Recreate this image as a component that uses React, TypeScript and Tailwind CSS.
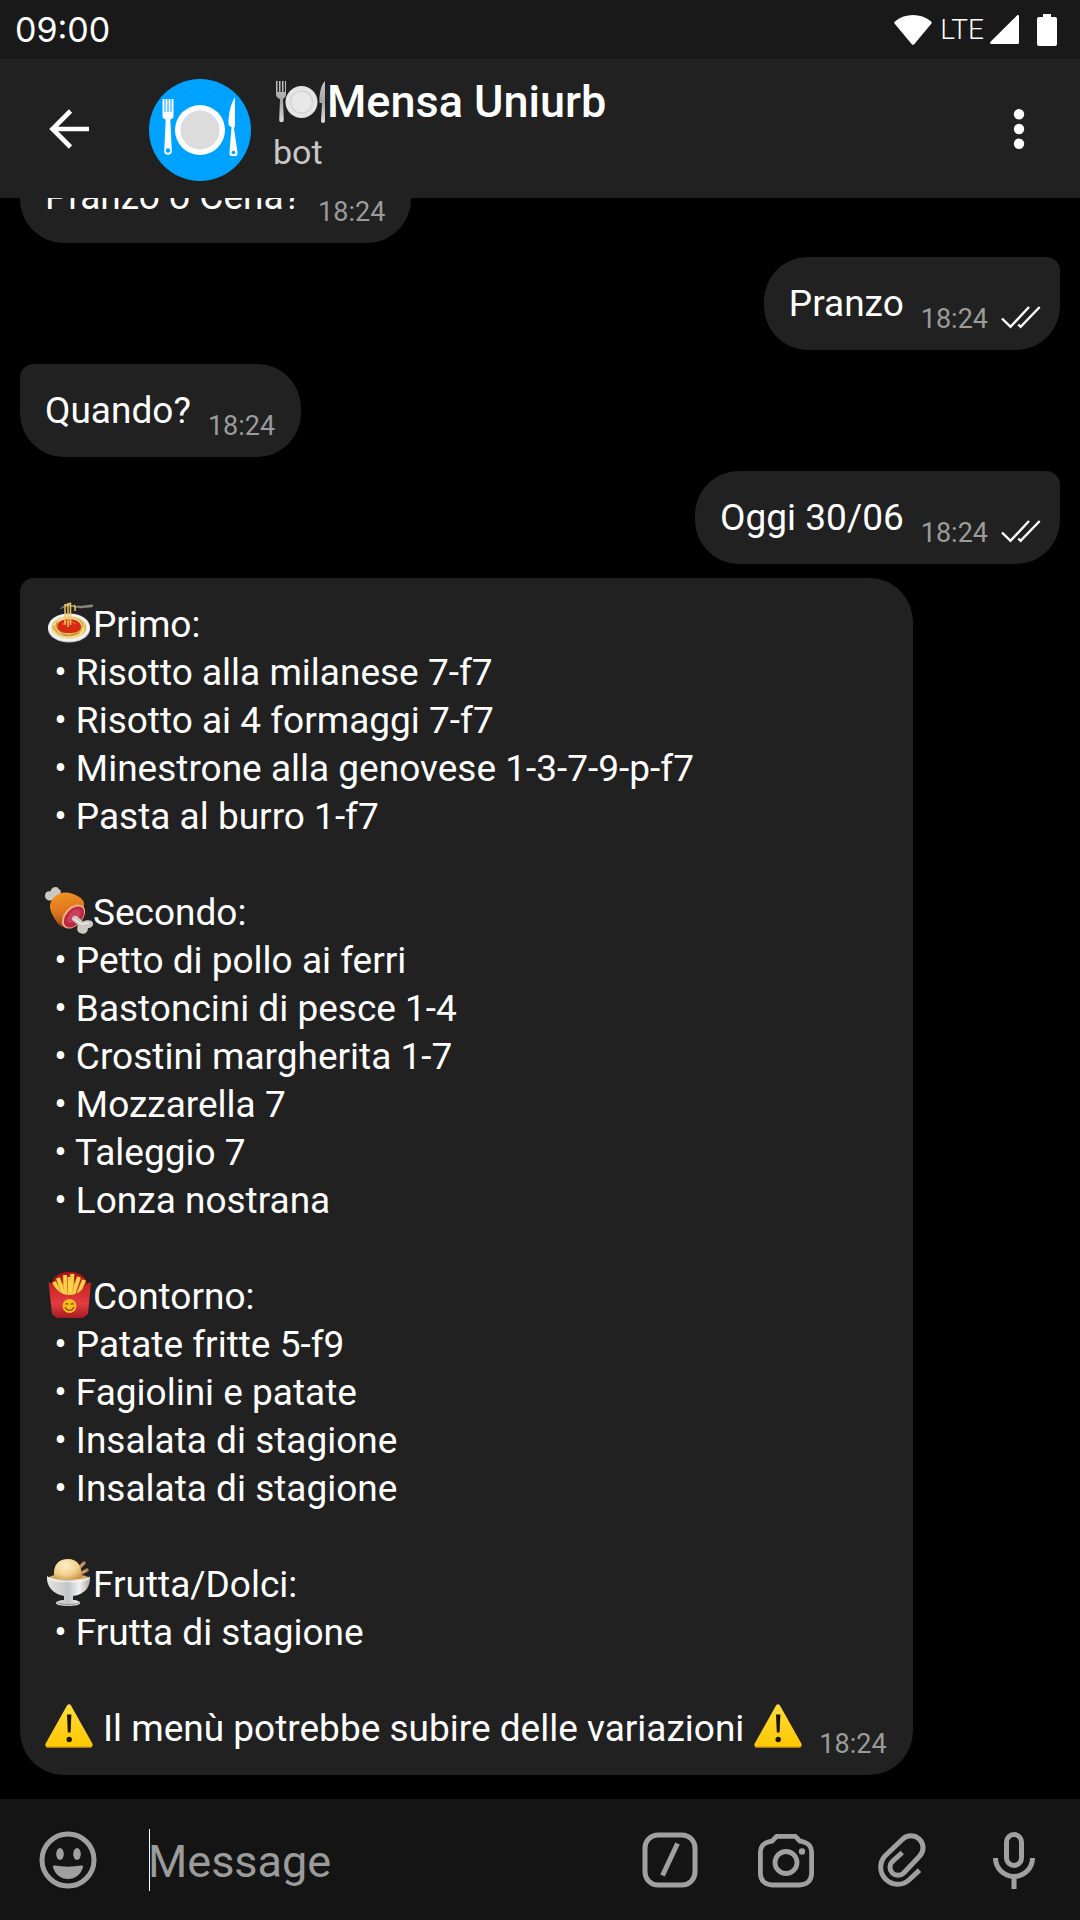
import type { ReactNode } from "react";

function WifiIcon() {
  return (
    <svg className="h-[30px] w-[38px]" viewBox="0 0 38 30" aria-hidden="true">
      <path d="M1.2 6.2C11-2 27-2 36.800 6.200c1 .8 1.100 1.700.5 2.500L20.200 29.200c-.7.8-1.700.8-2.400 0L.7 8.700C.1 7.900.2 7 1.200 6.200z" fill="#fff" />
    </svg>
  );
}

function SignalIcon() {
  return (
    <svg className="h-[29px] w-[29px]" viewBox="0 0 29 29" aria-hidden="true">
      <path d="M27 .5c.7-.8 2-.3 2 .8V27.500a1.500 1.500 0 0 1-1.500 1.500H1.500C.2 29-.4 27.600.5 26.700z" fill="#fff" />
    </svg>
  );
}

function BatteryIcon() {
  return (
    <svg className="h-[32px] w-[20px]" viewBox="0 0 20 32" aria-hidden="true">
      <path d="M6 0h8v3H6z" fill="#fff" />
      <rect x="0" y="3" width="20" height="29" rx="2" fill="#fff" />
    </svg>
  );
}

function BackIcon() {
  return (
    <svg className="h-[40px] w-[40px]" viewBox="0 0 40 40" fill="none" stroke="#fff" strokeWidth="4.600" aria-hidden="true">
      <path d="M40 20H4M21.500 2L3.500 20l18 18" />
    </svg>
  );
}

function MoreIcon() {
  return (
    <svg className="h-[40px] w-[12px]" viewBox="0 0 12 40" fill="#fff" aria-hidden="true">
      <circle cx="6" cy="5.300" r="5.200" />
      <circle cx="6" cy="20" r="5.200" />
      <circle cx="6" cy="34.700" r="5.200" />
    </svg>
  );
}

function Avatar() {
  return (
    <svg className="h-[102px] w-[102px] shrink-0" viewBox="0 0 102 102" role="img" aria-label="Mensa Uniurb">
      <circle cx="51" cy="51" r="51" fill="#00a2ff" />
      <path d="M13.500 20h2v13h1V20h2v13h1V20h2v13h1V20h2v17c0 1.800-1 2.800-3.200 3.600L22.800 72a3.800 3.800 0 0 1-7.600 0l1.500-31.400c-2.200-.8-3.200-1.800-3.200-3.600z" fill="#fff" />
      <circle cx="19" cy="71.500" r="2.200" fill="#00a2ff" />
      <circle cx="51" cy="51" r="25" fill="#fff" />
      <circle cx="51" cy="51" r="19.500" fill="#dcdcdc" />
      <path d="M86 18v29.500c-.5.5-1 1-1 2L88.500 73c.2 2.500-.4 4-1.500 4h-5c-1.200 0-1.700-1.500-1.500-4l2-25c-2-.5-3-1.500-3-3.500C79.500 34 82 24 86 18z" fill="#fff" />
      <circle cx="84.500" cy="73.500" r="1.800" fill="#00a2ff" />
    </svg>
  );
}

function PlateEmoji() {
  return (
    <svg className="h-[44px] w-[52px]" viewBox="0 0 52 44" aria-hidden="true">
      <defs>
        <linearGradient id="steel" x1="0" y1="0" x2="0" y2="1">
          <stop offset="0" stopColor="#c5c5c5" />
          <stop offset=".5" stopColor="#a5a5a5" />
          <stop offset="1" stopColor="#ddd" />
        </linearGradient>
      </defs>
      <path d="M1 1h1.500v11H4V1h1.500v11H7V1h1.500v11H10V1h1v13c0 3-1.500 4-3 5l.8 21c0 3-4.600 3-4.600 0L5 19c-2.500-1-4-2-4-5z" fill="url(#steel)" />
      <circle cx="26.500" cy="22" r="16" fill="#e4e4e4" />
      <circle cx="26.500" cy="22" r="11.500" fill="#d3d3d3" />
      <circle cx="26.500" cy="22" r="10.300" fill="#e8e8e8" />
      <path d="M50 1v40c0 2.500-4 2.500-4 0l1-18h-2.500C44 14 46 5 50 1z" fill="url(#steel)" />
    </svg>
  );
}

const emojiClass = "h-[48px] w-[48px] overflow-visible";

function SpaghettiEmoji() {
  return (
    <svg className={emojiClass} viewBox="0 2 48 48" aria-hidden="true">
      <ellipse cx="24" cy="30" rx="21" ry="13.500" fill="#b9bcc0" />
      <ellipse cx="24" cy="28.500" rx="21" ry="14" fill="#f2f2f0" />
      <ellipse cx="24" cy="28.500" rx="17.500" ry="11" fill="#e8bd5c" />
      <g fill="none" stroke="#f7dd94" strokeWidth="1.300">
        <ellipse cx="23" cy="29" rx="15" ry="9" />
        <ellipse cx="26" cy="30" rx="12.500" ry="9" />
        <path d="M9 31c4 8 18 10 29 2M10 24c6-6 18-8 28 2" />
      </g>
      <g fill="none" stroke="#b88125" strokeWidth=".8">
        <path d="M8.500 27c1 9 14 13 26 7M13 22c-5 5 3 14 10 14M35 22c6 6 0 12-10 14" />
      </g>
      <path d="M12.500 28c-1-4 4-8 11.500-8s12.500 4 12 8-5 6-12 6-11-2-11.500-6z" fill="#d62a12" />
      <path d="M17 26c3-4 10-4 14-1" fill="none" stroke="#f0543a" strokeWidth="1.500" />
      <path d="M15 10c4-5 9-5 13-4 6 2 12 0 20-.5V8c-8 1-14 2-20 0-4-1-8-1-12 2z" fill="#85847c" />
      <path d="M20 5v21M23 4v24M25.500 4v22M29 6c2 2 1 4 1 6M21 6l5-2" fill="none" stroke="#eec55f" strokeWidth="1.500" />
    </svg>
  );
}

function MeatEmoji() {
  return (
    <svg className={emojiClass} viewBox="0 0 48 48" aria-hidden="true">
      <defs>
        <linearGradient id="meat" x1="0.300" y1="0" x2=".5" y2="1">
          <stop offset="0" stopColor="#f29422" />
          <stop offset=".55" stopColor="#dd7420" />
          <stop offset="1" stopColor="#9a3c14" />
        </linearGradient>
      </defs>
      <path d="M7 11C3 13-.5 9.500 0 6s3-4.500 5.500-3.500C6-2.500 13-3.500 14 .5c2.500.5 2.500 4 0 6L10 10z" fill="#cbc9c2" />
      <path d="M10 7.500C16 1.500 26 2.500 35 8.500c3.500 2.500 4.500 5 4 9-1 10-7 20-17 21-5 .5-9.500-3.500-12.500-9C5.500 22.500 1.500 15 10 7.500z" fill="url(#meat)" />
      <ellipse cx="28.500" cy="27.500" rx="14" ry="9.200" transform="rotate(-48 28.500 27.500)" fill="#eeb080" />
      <ellipse cx="29" cy="28" rx="12.400" ry="7.800" transform="rotate(-48 29 28)" fill="#ba2944" />
      <ellipse cx="29" cy="27" rx="8.500" ry="4.800" transform="rotate(-48 29 27)" fill="#ca405a" />
      <path d="M27 31c-1-3 3-6 6-3l5 4.500c3-1.500 9-2 10 1.500.5 3-2 5-5 5 0 5-4 7-8 5-3-1.500-3.500-4-2-8z" fill="#cbc9c2" />
      <path d="M29.500 30l6.500 5c3 .5 5-1.500 8-1" fill="none" stroke="#ebe9e3" strokeWidth="1.500" />
    </svg>
  );
}

function FriesEmoji() {
  return (
    <svg className={emojiClass} viewBox="0 3 48 48" aria-hidden="true">
      <defs>
        <linearGradient id="carton" x1="0" y1="0" x2="0" y2="1">
          <stop offset="0" stopColor="#c8201f" />
          <stop offset=".6" stopColor="#e23c3f" />
          <stop offset="1" stopColor="#a81b24" />
        </linearGradient>
      </defs>
      <path d="M7 13C10-2 39-2 42 13l-6 14H12z" fill="#aa1518" />
      <g stroke="#e8aa2b" strokeWidth="4.400">
        <path d="M13 8l6 17M20 5v20M27 4v22M34 7l-6 18M39 10l-6 15M9 12l6 12" />
      </g>
      <g stroke="#fbd24e" strokeWidth="2.800">
        <path d="M13 8l6 17M20 5l1 20M28 4l-3 22M34 7l-6 18M39 10l-6 15M9 12l6 12M24 7v19" />
      </g>
      <path d="M3.500 12l4 2c5 8 11 11 17 11s12-3 17-11l4.500-2-3 32-5 4H12l-5-4z" fill="url(#carton)" />
      <circle cx="24.500" cy="36" r="7" fill="#f8bb20" />
      <path d="M20 37c2 4.500 7 4.500 9 0M20.500 34.500c.8-1.300 2-1.300 2.700 0M26 34.500c.8-1.300 2-1.300 2.700 0" fill="none" stroke="#885000" strokeWidth="1.200" />
    </svg>
  );
}

function IceCreamEmoji() {
  return (
    <svg className={emojiClass} viewBox="0 3 48 48" aria-hidden="true">
      <defs>
        <linearGradient id="cup" x1="0" y1="0" x2="1" y2="0">
          <stop offset="0" stopColor="#e6e6e6" />
          <stop offset=".5" stopColor="#c3c4c5" />
          <stop offset=".75" stopColor="#f2f2f2" />
          <stop offset="1" stopColor="#aaa" />
        </linearGradient>
        <radialGradient id="scoop" cx=".4" cy=".3" r=".75">
          <stop offset="0" stopColor="#fff0c8" />
          <stop offset=".6" stopColor="#f2cf8b" />
          <stop offset="1" stopColor="#c99242" />
        </radialGradient>
      </defs>
      <path d="M33 11l6-6M35 16l7-4" stroke="#b78361" strokeWidth="3.500" strokeLinecap="round" />
      <path d="M33 11l6-6M35 16l7-4" stroke="#ecd0b8" strokeWidth="1" strokeDasharray="2 2" />
      <ellipse cx="23.500" cy="20" rx="20" ry="4" fill="#d9a75b" />
      <path d="M9 19C8 6 14 1 23 1s14 6 14 18c-3 4-8 2-14 3s-11 1-14-3z" fill="url(#scoop)" />
      <path d="M2 18c6 5 38 5 43 0 1 10-5 19-17 20v4c5 0 7 2 7 3 0 2-5 3-12 3s-12-1-12-3c0-1 3-3 8-3v-4C8 36 1 28 2 18z" fill="url(#cup)" />
      <path d="M3 20c7 5 35 5 41 0" fill="none" stroke="#f8f4e8" strokeWidth="1.200" />
      <path d="M13 45c5 2 16 2 21 0" fill="none" stroke="#8e8e8e" strokeWidth="1" />
    </svg>
  );
}

function WarningEmoji() {
  return (
    <svg className={emojiClass} viewBox="0 3 48 48" role="img" aria-label="Attenzione">
      <defs>
        <linearGradient id="warn" x1="0" y1="0" x2="0" y2="1">
          <stop offset="0" stopColor="#ffdc3c" />
          <stop offset="1" stopColor="#ffc700" />
        </linearGradient>
      </defs>
      <path d="M22 3.500c1-1.800 3-1.800 4 0l21.300 38c1 2-.3 4-2.300 4H3c-2 0-3.300-2-2.300-4z" fill="url(#warn)" />
      <path d="M1 44.800h46" stroke="#c99a10" strokeWidth=".8" />
      <path d="M22 12.500h4.400l-.8 18h-2.800z" fill="#1a1500" />
      <circle cx="24.200" cy="37.500" r="2.700" fill="#1a1500" />
    </svg>
  );
}

function ReadIcon() {
  return (
    <svg className="h-[28px] w-[40px]" viewBox="0 0 40 28" fill="none" stroke="#fff" strokeWidth="2.400" aria-label="Letto" role="img">
      <path d="M1 13.500l8.500 8.300L28 2M17.300 19.500l2.300 2.300L38.700 2" />
    </svg>
  );
}

type BubbleProps = { side: "in" | "out"; children: ReactNode };

function Bubble({ side, children }: BubbleProps) {
  const sent = side === "out";
  return (
    <article
      className={
        sent
          ? "flex max-w-[86%] shrink-0 items-end gap-[17px] self-end rounded-[44px] rounded-tr-[14px] bg-[#212121] pt-[23px] pr-[19px] pb-[22px] pl-[25px]"
          : "flex max-w-[86%] shrink-0 items-end gap-[17px] self-start rounded-[44px] rounded-tl-[14px] bg-[#212121] pt-[23px] pr-[26px] pb-[22px] pl-[25px]"
      }
    >
      <div>{children}</div>
      <div className="-mb-[7px] flex items-center gap-[13px] text-[27px] leading-8 text-[#9b9b9b]">
        <time>18:24</time>
        {sent && <ReadIcon />}
      </div>
    </article>
  );
}

const sections = [
  {
    title: "Primo:",
    icon: <SpaghettiEmoji />,
    items: ["Risotto alla milanese 7-f7", "Risotto ai 4 formaggi 7-f7", "Minestrone alla genovese 1-3-7-9-p-f7", "Pasta al burro 1-f7"],
  },
  {
    title: "Secondo:",
    icon: <MeatEmoji />,
    items: ["Petto di pollo ai ferri", "Bastoncini di pesce 1-4", "Crostini margherita 1-7", "Mozzarella 7", "Taleggio 7", "Lonza nostrana"],
  },
  {
    title: "Contorno:",
    icon: <FriesEmoji />,
    items: ["Patate fritte 5-f9", "Fagiolini e patate", "Insalata di stagione", "Insalata di stagione"],
  },
  { title: "Frutta/Dolci:", icon: <IceCreamEmoji />, items: ["Frutta di stagione"] },
];

function Menu() {
  return (
    <div className="flex flex-col gap-12">
      {sections.map((section) => (
        <section key={section.title}>
          <h2 className="flex items-center">
            {section.icon}
            {section.title}
          </h2>
          <ul>
            {section.items.map((item, i) => (
              <li key={i} className="whitespace-pre">{" • " + item}</li>
            ))}
          </ul>
        </section>
      ))}
      <p className="flex items-center gap-[10px] whitespace-nowrap">
        <WarningEmoji />
        Il menù potrebbe subire delle variazioni
        <WarningEmoji />
      </p>
    </div>
  );
}

const composerIcon = "h-[64px] w-[64px]";

function Composer() {
  return (
    <form className="flex h-[121px] shrink-0 items-center bg-[#141414] pr-[34px] pl-9" onSubmit={(e) => e.preventDefault()}>
      <button type="button" aria-label="Emoji">
        <svg className={composerIcon} viewBox="0 0 64 64" fill="#a0a0a0" aria-hidden="true">
          <circle cx="32" cy="32" r="26" fill="none" stroke="#a0a0a0" strokeWidth="5" />
          <ellipse cx="24" cy="26" rx="3.800" ry="6" />
          <ellipse cx="41" cy="26" rx="3.800" ry="6" />
          <path d="M18.500 37.500c9 1.500 18 1.500 27 0 1.200-.2 1.800.6 1.500 1.700C45 46 39.500 51 32 51s-13-5-15-11.800c-.3-1.100.3-1.900 1.500-1.700z" />
        </svg>
      </button>
      <div className="relative ml-12 min-w-0 flex-1">
        <input type="text" aria-label="Message" placeholder="Message" className="h-[62px] w-full bg-transparent pt-1 text-[45px] text-white outline-none placeholder:text-[#9b9b9b] placeholder:opacity-100" />
        <span className="absolute top-0 left-px h-full w-px bg-white" />
      </div>
      <div className="flex items-center gap-[50px]">
        <button type="button" aria-label="Comandi">
          <svg className={composerIcon} viewBox="2 0 64 64" fill="none" stroke="#a0a0a0" strokeWidth="5" aria-hidden="true">
            <rect x="7" y="7" width="50" height="50" rx="13" />
            <path d="M24.500 47.500l15-32" />
          </svg>
        </button>
        <button type="button" aria-label="Fotocamera">
          <svg className={composerIcon} viewBox="0 0 64 64" fill="none" stroke="#a0a0a0" strokeWidth="4.800" aria-hidden="true">
            <path d="M22.700 8.400h18.600l4.500 4.600 3.500.8c5 1.200 8.300 5 8.300 10.200v21.500c0 7-5 11.500-12 11.500H18.400c-7 0-12-4.500-12-11.500V24c0-5.200 3.300-9 8.300-10.200l3.500-.8z" />
            <circle cx="32" cy="34.500" r="11" />
            <circle cx="48" cy="23.500" r="3.200" fill="#a0a0a0" stroke="none" />
          </svg>
        </button>
        <button type="button" aria-label="Allega">
          <svg className={composerIcon} viewBox="868 1827 64 64" fill="none" stroke="#a0a0a0" strokeWidth="5" aria-hidden="true">
            <path d="M919.500 1869.200L909 1879a17 17 0 0 1-24-24.000L902.500 1838.200a12 12 0 0 1 17 17L903.700 1872a8 8 0 0 1-11.400-11.400L902.300 1851.500" />
          </svg>
        </button>
        <button type="button" aria-label="Messaggio vocale">
          <svg className={composerIcon} viewBox="982 1828 64 64" fill="none" stroke="#a0a0a0" strokeWidth="5" aria-hidden="true">
            <rect x="1006.500" y="1834.500" width="15" height="31" rx="7.500" />
            <path d="M995.500 1858a18.500 18.500 0 0 0 37 0M1014 1876v13" />
          </svg>
        </button>
      </div>
    </form>
  );
}

export default function App() {
  return (
    <div className="flex h-screen flex-col overflow-hidden bg-black font-['Roboto',sans-serif] text-white">
      <div className="flex h-[59px] shrink-0 items-center justify-between bg-[#191919] pr-[23px] pl-[15px]">
        <time className="font-['Inter',sans-serif] text-[34px] leading-10">09:00</time>
        <div className="flex items-center">
          <WifiIcon />
          <span className="ml-[8px] text-[28px] leading-8 font-light">LTE</span>
          <span className="ml-1.5 flex items-center gap-[18px]">
            <SignalIcon />
            <BatteryIcon />
          </span>
        </div>
      </div>

      <header className="flex h-[139px] shrink-0 items-center bg-[#212121] pr-[55px] pl-[49px]">
        <button type="button" aria-label="Indietro">
          <BackIcon />
        </button>
        <div className="ml-[60px] flex min-w-0 flex-1 items-center gap-[22px] pt-[3px]">
          <Avatar />
          <div className="pb-2">
            <h1 className="flex items-center pl-0.5 text-[45px] leading-[52px] font-medium">
              <PlateEmoji />
              Mensa Uniurb
            </h1>
            <p className="text-[34px] leading-12 text-[#c8c8c8]">bot</p>
          </div>
        </div>
        <button type="button" aria-label="Altre opzioni">
          <MoreIcon />
        </button>
      </header>

      <main className="flex min-h-0 flex-1 flex-col justify-end gap-[14px] overflow-hidden px-5 pb-6 text-[37px] leading-12">
        <Bubble side="in">Pranzo o Cena?</Bubble>
        <Bubble side="out">Pranzo</Bubble>
        <Bubble side="in">Quando?</Bubble>
        <Bubble side="out">Oggi 30/06</Bubble>
        <Bubble side="in">
          <Menu />
        </Bubble>
      </main>

      <Composer />
    </div>
  );
}
